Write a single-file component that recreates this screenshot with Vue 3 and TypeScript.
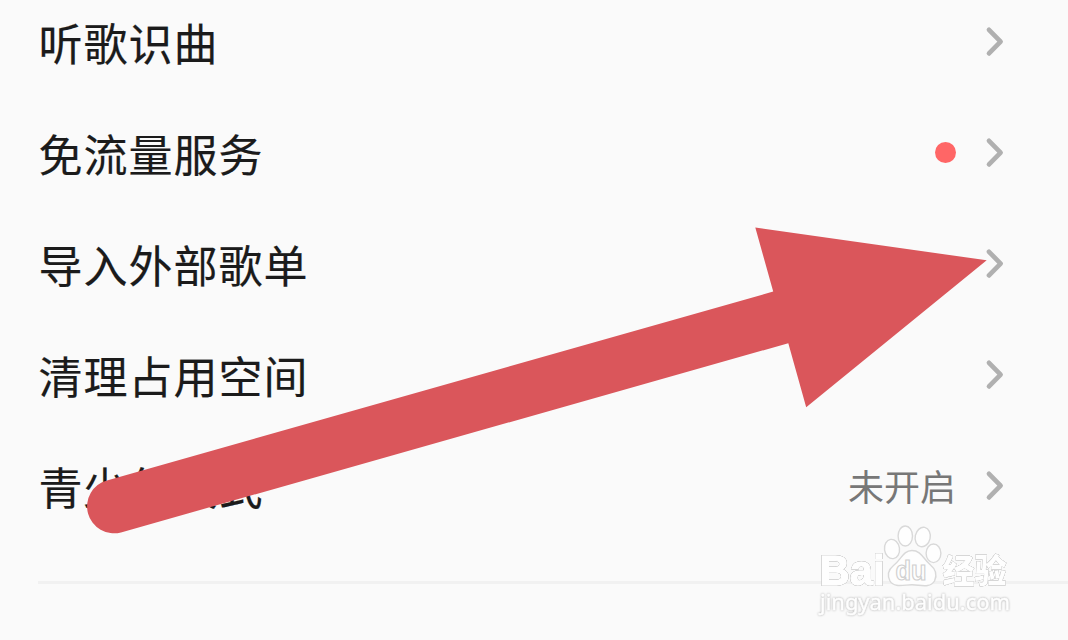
<script setup lang="ts">
interface MenuItem {
  label: string
  value?: string
  dot?: boolean
}

const items: MenuItem[] = [
  { label: '听歌识曲' },
  { label: '免流量服务', dot: true },
  { label: '导入外部歌单' },
  { label: '清理占用空间' },
  { label: '青少年模式', value: '未开启' },
]
</script>

<template>
  <main class="screen">
    <ul class="menu">
      <li v-for="item in items" :key="item.label" class="row">
        <span class="label">{{ item.label }}</span>
        <span v-if="item.value" class="value">{{ item.value }}</span>
        <i v-if="item.dot" class="dot"></i>
        <svg class="chevron" width="20" height="32" viewBox="0 0 20 32">
          <path d="M4 3.8 L15.6 15.6 L4 27.4" />
        </svg>
      </li>
    </ul>
    <hr class="divider" />

    <svg class="overlay" width="1068" height="640" viewBox="0 0 1068 640">
      <path
        class="arrow"
        d="M107 480.4 L773.2 291.6 L755.3 227.5 L986.7 260.3 L806.2 407.3 L788.3 343.2 L121 532.4 A26.9 26.9 0 0 1 107 480.4 Z"
      />
      <g class="mark">
        <text class="brand" x="819.5" y="584.5" textLength="65" lengthAdjust="spacingAndGlyphs">Bai</text>
        <ellipse cx="892" cy="549" rx="7.5" ry="9.7" transform="rotate(-8 892 549)" />
        <ellipse cx="905.3" cy="536" rx="7.2" ry="10" />
        <ellipse cx="922.7" cy="537" rx="7.5" ry="9.8" transform="rotate(12 922.7 537)" />
        <ellipse cx="933.5" cy="553.3" rx="7.4" ry="9.3" />
        <path d="M912 550.5 C903 550.5 901 560 893.5 565.5 C888 570 887.5 576 890 581 C894 588 904 584.8 912 584.8 C920 584.8 930 588.5 934.5 581 C937.5 575 936 569.5 930 564.5 C923 558.5 921 550.5 912 550.5 Z" />
        <text class="du" x="895.5" y="580" textLength="31" lengthAdjust="spacingAndGlyphs">du</text>
        <text class="cn" x="942.5" y="582.5" textLength="64" lengthAdjust="spacingAndGlyphs">经验</text>
        <text class="url" x="820" y="610" textLength="190" lengthAdjust="spacingAndGlyphs">jingyan.baidu.com</text>
      </g>
    </svg>
  </main>
</template>

<style>
html,
body {
  margin: 0;
  background: #fafafa;
}
</style>

<style scoped>
.screen {
  position: relative;
  width: 1068px;
  height: 640px;
  overflow: hidden;
  background: #fafafa;
  font-family: "Noto Sans CJK SC", "Noto Sans", sans-serif;
}

.menu {
  list-style: none;
  margin: -14px 0 0;
  padding: 0 63px 0 38px;
}

.row {
  display: flex;
  align-items: center;
  height: 111px;
}

.label {
  flex: 1;
  padding-top: 1px;
  padding-left: 0.5px;
  font-size: 44px;
  line-height: 60px;
  letter-spacing: 1px;
  color: #1b1b1b;
  -webkit-text-stroke: 0.2px #1b1b1b;
  white-space: nowrap;
}

.value {
  margin-right: 29px;
  padding-bottom: 1px;
  font-size: 36px;
  line-height: 50px;
  color: #777;
}

.dot {
  width: 21px;
  height: 21px;
  margin-right: 29px;
  border-radius: 50%;
  background: #ff6666;
}

.chevron {
  fill: none;
  stroke: #b0b0b0;
  stroke-width: 4.7;
  stroke-linecap: round;
  stroke-linejoin: round;
}

.divider {
  height: 3px;
  margin: 40px 0 0 38px;
  border: 0;
  background: #f1f1f1;
}

.overlay {
  position: absolute;
  top: 0;
  left: 0;
}

.arrow {
  fill: #da565b;
}

.mark {
  fill: #fefefe;
  stroke: #d9d9d9;
  stroke-width: 1.4;
}

.mark text {
  stroke: #fefefe;
  stroke-width: 1.4;
  filter: drop-shadow(0 0 0.7px #999) drop-shadow(0 0 0.4px #bbb);
}

.brand {
  font: bold 42px "Liberation Sans", sans-serif;
}

.mark .du {
  font: bold 27px "Liberation Sans", sans-serif;
  stroke: #d0d0d0;
  stroke-width: 1.2;
  filter: none;
}

.cn {
  font: 900 33px "Noto Sans CJK SC", sans-serif;
}

.mark .cn {
  stroke-width: 0.3;
}

.url {
  font: 22px "Noto Sans", sans-serif;
}

.mark .url {
  stroke-width: 0.5;
  filter: drop-shadow(0 0 0.8px #aaa);
}
</style>
